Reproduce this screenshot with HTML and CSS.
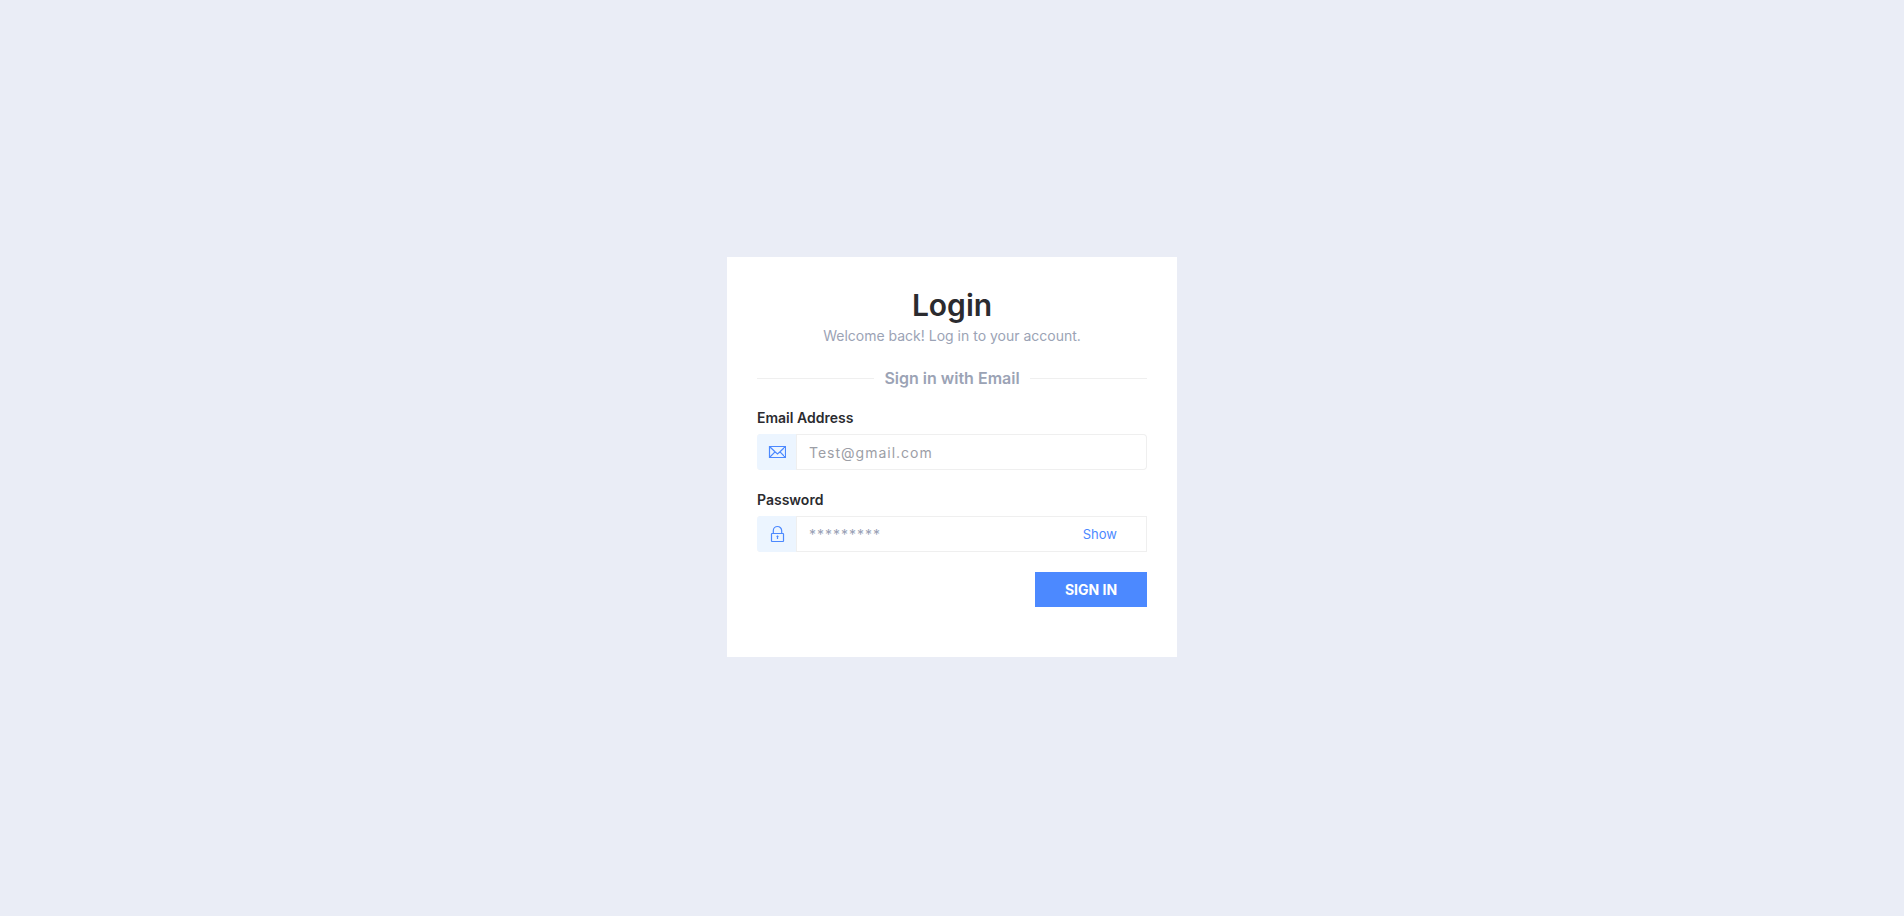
FILE: index.html
```html
<!DOCTYPE html>
<html lang="en">
<head>
<meta charset="utf-8">
<meta name="viewport" content="width=device-width, initial-scale=1">
<title>Login</title>
<link rel="stylesheet" href="styles.css">
</head>
<body>
<main class="page">
  <form class="card">
    <h1 class="title">Login</h1>
    <p class="subtitle">Welcome back! Log in to your account.</p>
    <h2 class="divider">Sign in with Email</h2>
    <div class="field">
      <label class="label" for="email">Email Address</label>
      <div class="group">
        <span class="addon">
          <svg class="icon" viewBox="0 0 18 18" aria-hidden="true"><path d="M1.500 3.500h16v11h-16zM1.500 3.500l5.500 5.300 2.500 2.200 2.500-2.200 5.500-5.300M1.500 14.500l5.500-5.700M17.500 14.500l-5.500-5.700"/></svg>
        </span>
        <input class="input" id="email" type="email" placeholder="Test@gmail.com">
      </div>
    </div>
    <div class="field">
      <label class="label" for="password">Password</label>
      <div class="group group-square">
        <span class="addon">
          <svg class="icon" viewBox="0 0 18 18" aria-hidden="true"><path d="M4 8.500h11a.5.5 0 0 1 .5.5v7a.5.5 0 0 1-.5.5H4a.5.5 0 0 1-.5-.5V9a.5.5 0 0 1 .5-.5zM5.300 8.500V5.700a4.200 4.200 0 0 1 8.400 0v2.800M9.500 10.500v3.500M8.500 11.500h2"/></svg>
        </span>
        <input class="input input-password" id="password" type="password" placeholder="*********">
        <button class="show" type="button">Show</button>
      </div>
    </div>
    <button class="submit" type="submit">SIGN IN</button>
  </form>
</main>
</body>
</html>
```
FILE: styles.css
```css
* {
  box-sizing: border-box;
}

body {
  margin: 0;
  background: #eaedf6;
  color: #2b2b2f;
  font-family: Inter, "Liberation Sans", sans-serif;
  font-size: 14px;
}

.page {
  display: flex;
  align-items: center;
  justify-content: center;
  min-height: 100vh;
  padding-bottom: 2px;
}

.card {
  display: flex;
  flex-direction: column;
  width: 100%;
  max-width: 450px;
  padding: 30px 30px 50px;
  background: #fff;
}

.title {
  margin: 0;
  font-size: 30px;
  font-weight: 600;
  line-height: 36px;
  text-align: center;
}

.subtitle {
  margin: 0 0 16px;
  color: #9ba3b5;
  line-height: 26px;
  text-align: center;
}

.divider {
  display: flex;
  align-items: center;
  gap: 10px;
  margin: 0 0 17px;
  color: #9ba3b5;
  font-size: 16px;
  font-weight: 600;
  line-height: 26px;
}

.divider::before,
.divider::after {
  content: "";
  flex: 1;
  height: 1px;
  background: #efefef;
}

.field {
  margin-bottom: 20px;
}

.label {
  display: block;
  margin-bottom: 6px;
  font-weight: 600;
  line-height: 20px;
}

.group {
  display: flex;
  height: 36px;
  border: 1px solid #efefef;
  border-left: 0;
  border-radius: 4px;
}

.group-square {
  border-radius: 4px 0 0 4px;
}

.addon {
  display: flex;
  align-items: center;
  justify-content: center;
  width: 40px;
  margin: -1px 0;
  border-right: 1px solid #efefef;
  border-radius: 4px 0 0 4px;
  background: #ecf5ff;
}

.icon {
  width: 18px;
  height: 18px;
  fill: none;
  stroke: #4c89ff;
  stroke-width: 1.2;
}

.input {
  flex: 1;
  min-width: 0;
  padding: 0 12px;
  border: 0;
  background: none;
  color: #898989;
  font: inherit;
  letter-spacing: 1px;
}

.input::placeholder {
  color: #9c9ea6;
}

.input-password::placeholder {
  color: #999fb5;
}

.show {
  padding: 0 29px;
  border: 0;
  background: none;
  color: #4c89ff;
  font: inherit;
  font-size: 13px;
}

.submit {
  align-self: flex-end;
  min-width: 112px;
  padding: 0 28px;
  border: 0;
  background: #4c89ff;
  color: #fff;
  font: inherit;
  font-weight: 700;
  line-height: 35px;
}
```
